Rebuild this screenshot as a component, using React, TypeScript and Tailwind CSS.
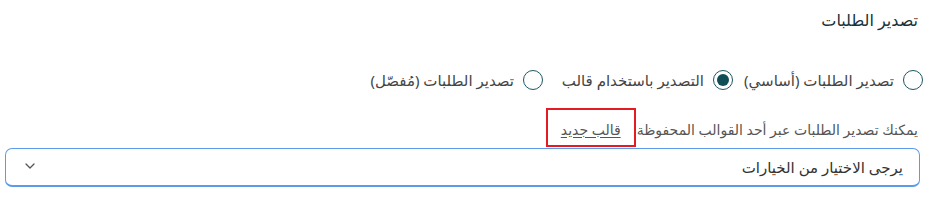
import { useState } from "react";

const options = [
    { id: "basic", label: "تصدير الطلبات (أساسي)" },
    { id: "template", label: "التصدير باستخدام قالب" },
    { id: "detailed", label: "تصدير الطلبات (مُفصّل)" },
];

const Radio = ({ checked }: { checked: boolean }) => (
    <span className="flex items-center justify-center w-5 h-5 rounded-full border-[1.5px] border-[#1d5660] bg-white shrink-0">
        {checked && <span className="w-3 h-3 rounded-full bg-[#0f4d57]" />}
    </span>
);

export default function App() {
    const [selected, setSelected] = useState("template");

    return (
        <div dir="rtl" className="w-[935px] h-[209px] bg-white font-['Noto_Sans','DejaVu_Sans',sans-serif] text-[#333]">
            <div className="flex flex-col pr-[17px] pl-[5px] pt-[8px]">
                <h2 className="text-[16px] leading-6 text-[#16323b]">تصدير الطلبات</h2>

                <div className="flex items-center mt-[38px] -mr-[5px]">
                    {options.map((opt) => (
                        <label key={opt.id} className="flex items-center gap-[9px] w-[190px] cursor-pointer" onClick={() => setSelected(opt.id)}>
                            <Radio checked={selected === opt.id} />
                            <span className="text-[15px] leading-5 text-[#444] whitespace-nowrap">{opt.label}</span>
                        </label>
                    ))}
                </div>

                <p className="flex items-center mt-[18px] text-[14px] text-[#555] leading-5">
                    <span className="mt-[4px]">يمكنك تصدير الطلبات عبر أحد القوالب المحفوظة</span>
                    <span className="flex items-center h-[39px] mr-[1px] px-[13px] pt-[4px] border-2 border-[#e31b23]">
                        <a href="#" className="underline underline-offset-2 text-[#555]">قالب جديد</a>
                    </span>
                </p>

                <div className="mt-[1px] -mr-[2px] flex items-center justify-between h-[39px] rounded-[7px] border border-[#5b9bea] border-b-2 px-[16px] bg-white">
                    <span className="text-[15px] text-[#333]">يرجى الاختيار من الخيارات</span>
                    <svg width="12" height="8" viewBox="0 0 12 8" className="ml-[2px] mt-[-2px]">
                        <path d="M2 2 L6 6 L10 2" fill="none" stroke="#555" strokeWidth="1.3" strokeLinecap="round" strokeLinejoin="round" />
                    </svg>
                </div>
            </div>
        </div>
    );
}
